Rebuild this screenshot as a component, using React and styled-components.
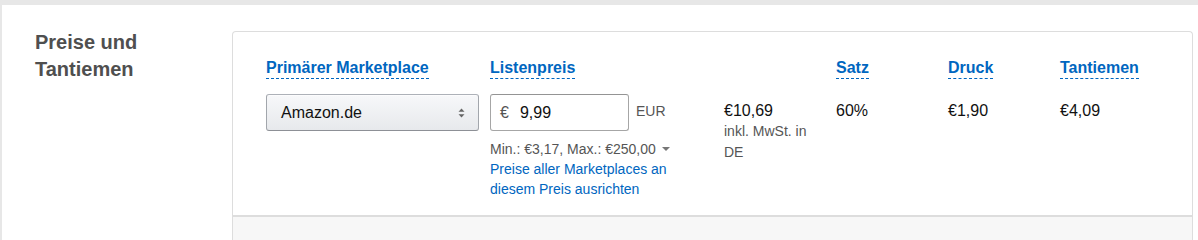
import React from 'react';
import styled, { createGlobalStyle } from 'styled-components';

const Global = createGlobalStyle`
  html, body {
    margin: 0;
    padding: 0;
    height: 100%;
    overflow: hidden;
    background: #e7e7e7;
    font-family: "Liberation Sans", Arial, sans-serif;
    color: #111;
  }
`;

const Section = styled.section`
  box-sizing: border-box;
  height: calc(100vh - 5px);
  margin: 5px 0 0 2px;
  background: #fff;
  display: grid;
  grid-template-columns: 197px 1fr;
  padding: 26px 5px 0 33px;
  overflow: hidden;
`;

const Title = styled.h2`
  margin: -2px 0 0 0;
  font-size: 20px;
  line-height: 26.5px;
  font-weight: 700;
  color: #4f4f4f;
`;

const Card = styled.div`
  border: 1px solid #ddd;
  border-bottom: none;
  border-radius: 4px 4px 0 0;
  display: flex;
  flex-direction: column;
`;

const CardBody = styled.div`
  padding: 26px 0 16px 33px;
  display: grid;
  grid-template-columns: 224px 234px 112px 112px 112px 1fr;
  row-gap: 15px;
`;

const CardFooter = styled.div`
  flex: 1;
  border-top: 2px solid #ddd;
  background: #f7f7f7;
`;

const Head = styled.div`
  font-size: 16px;
  line-height: 20px;
  font-weight: 700;
  color: #0066c0;
`;

const Dashed = styled.span`
  display: inline-block;
  border-bottom: 1px dashed #0066c0;
`;

const Cell = styled.div`
  padding-top: ${p => (p.$offset ? '7px' : '0')};
  font-size: 16px;
  line-height: 20px;
`;

const Dropdown = styled.button`
  box-sizing: border-box;
  width: 213px;
  height: 37px;
  display: flex;
  align-items: center;
  justify-content: space-between;
  padding: 0 13px 0 14px;
  border: 1px solid;
  border-color: #adb1b8 #a2a6ac #8d9096;
  border-radius: 3px;
  background: linear-gradient(to bottom, #f7f8fa, #e7e9ec);
  box-shadow: inset 0 1px 0 rgba(255, 255, 255, 0.6);
  font-family: inherit;
  font-size: 16px;
  color: #111;
  cursor: pointer;
`;

const PriceRow = styled.div`
  display: flex;
  align-items: flex-start;
  gap: 7px;
`;

const PriceBox = styled.label`
  box-sizing: border-box;
  width: 139px;
  height: 37px;
  display: flex;
  align-items: center;
  gap: 11px;
  padding: 0 9px;
  border: 1px solid #a6a6a6;
  border-top-color: #949494;
  border-radius: 3px;
  box-shadow: inset 0 1px 0 rgba(255, 255, 255, 0.5);
  font-size: 16px;
  color: #555;
`;

const PriceInput = styled.input`
  border: none;
  outline: none;
  width: 90px;
  padding: 0;
  font-family: inherit;
  font-size: 16px;
  color: #111;
  background: transparent;
`;

const Unit = styled.span`
  padding-top: 7px;
  font-size: 14px;
  line-height: 20px;
  color: #555;
`;

const Small = styled.div`
  font-size: 14px;
  line-height: ${p => p.$lh || '20px'};
  color: ${p => (p.$link ? '#0066c0' : '#555')};
  margin-top: ${p => p.$mt || '0'};
`;

const Caret = styled.span`
  display: inline-block;
  margin-left: 6px;
  vertical-align: 3px;
  border-left: 4px solid transparent;
  border-right: 4px solid transparent;
  border-top: 4px solid #777;
`;

const heads = ['Primärer Marketplace', 'Listenpreis', null, 'Satz', 'Druck', 'Tantiemen'];

export default function App() {
  return (
    <>
      <Global />
      <Section>
        <Title>
          Preise und
          <br />
          Tantiemen
        </Title>
        <Card>
          <CardBody>
            {heads.map((h, i) => (
              <Head key={i}>{h && <Dashed>{h}</Dashed>}</Head>
            ))}

            <Cell>
              <Dropdown type="button">
                <span>Amazon.de</span>
                <svg width="7" height="10" viewBox="0 0 7 10">
                  <path d="M3.5 0.5 L6.5 3.8 L0.5 3.8 Z M3.5 9.5 L6.5 6.2 L0.5 6.2 Z" fill="#666" />
                </svg>
              </Dropdown>
            </Cell>

            <Cell>
              <PriceRow>
                <PriceBox>
                  €
                  <PriceInput defaultValue="9,99" />
                </PriceBox>
                <Unit>EUR</Unit>
              </PriceRow>
              <Small $mt="8px">
                Min.: €3,17, Max.: €250,00
                <Caret />
              </Small>
              <Small $link>
                Preise aller Marketplaces an
                <br />
                diesem Preis ausrichten
              </Small>
            </Cell>

            <Cell $offset>
              €10,69
              <Small $lh="21px">
                inkl. MwSt. in
                <br />
                DE
              </Small>
            </Cell>

            <Cell $offset>60%</Cell>
            <Cell $offset>€1,90</Cell>
            <Cell $offset>€4,09</Cell>
          </CardBody>
          <CardFooter />
        </Card>
      </Section>
    </>
  );
}
